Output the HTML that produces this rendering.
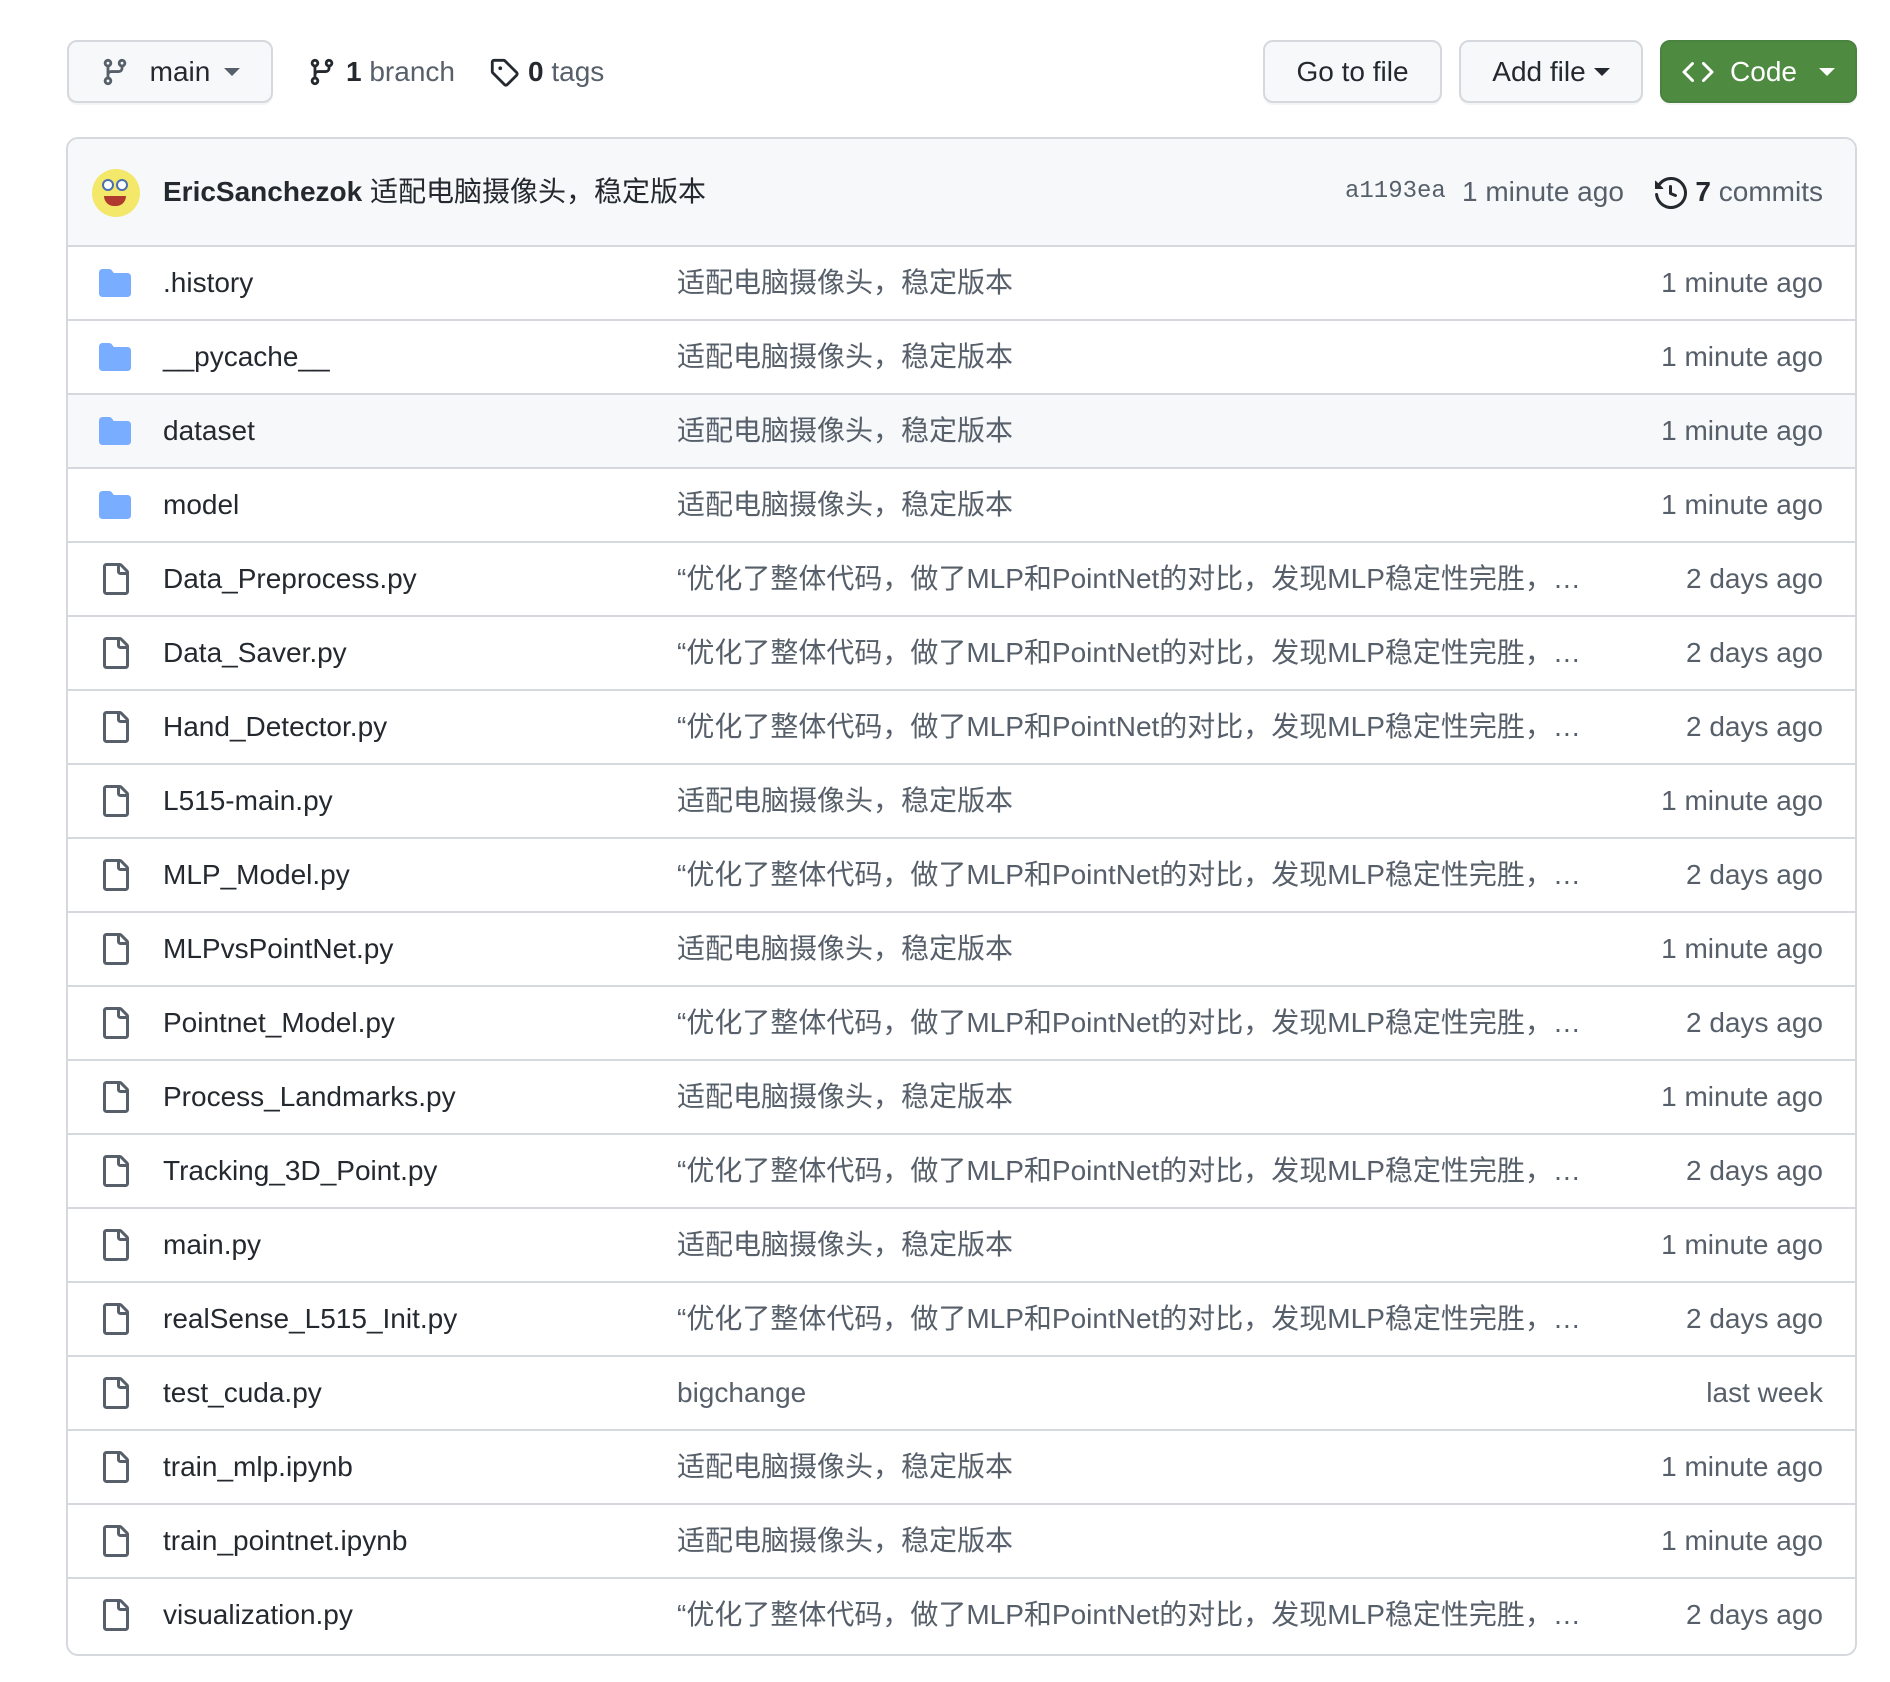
<!DOCTYPE html>
<html><head><meta charset="utf-8"><style>
*{box-sizing:border-box;margin:0;padding:0}
body{width:1890px;height:1682px;background:#fff;font-family:"Liberation Sans","Noto Sans CJK SC",sans-serif;color:#24292f;position:relative;overflow:hidden}
.btn{position:absolute;top:40px;height:63px;border:2px solid #d5d9de;border-radius:10px;background:#f6f8fa;font-size:28px;display:flex;align-items:center;justify-content:center;box-shadow:0 2px 0 rgba(0,0,0,.04)}
.caret{display:inline-block;width:0;height:0;border-left:8px solid transparent;border-right:8px solid transparent;border-top:8px solid currentColor;margin-left:14px}
.abs{position:absolute}
.box{position:absolute;left:66px;top:137px;width:1791px;height:1519px;border:2px solid #d5d9de;border-radius:12px;overflow:hidden}
.hdr{height:108px;background:#f6f8fa;border-bottom:2px solid #d5d9de;position:relative;font-size:28px}
.hdr .t{position:absolute;top:0;line-height:106px;white-space:nowrap}
.row{position:absolute;left:0;right:0;height:74px;border-top:2px solid #d5d9de;font-size:28px}
.row svg{position:absolute;left:31px;top:20px}
.row div{position:absolute;top:0;line-height:72px;white-space:nowrap}
.name{left:95px;color:#24292f}
.msg{left:609px;color:#57606a}
.age{right:32px;color:#57606a}
.gray{color:#57606a}
</style></head><body>
<div class="btn" style="left:67px;width:206px"><svg width="30" height="30" viewBox="0 0 16 16" fill="#57606a" style="margin-right:20px"><path d="M9.5 3.25a2.25 2.25 0 1 1 3 2.122V6A2.5 2.5 0 0 1 10 8.5H6a1 1 0 0 0-1 1v1.128a2.251 2.251 0 1 1-1.5 0V5.372a2.25 2.25 0 1 1 1.5 0v1.836A2.493 2.493 0 0 1 6 7h4a1 1 0 0 0 1-1v-.628A2.25 2.25 0 0 1 9.5 3.25Zm-6 0a.75.75 0 1 0 1.5 0 .75.75 0 0 0-1.5 0Zm8.25-.75a.75.75 0 1 0 0 1.5.75.75 0 0 0 0-1.5ZM4.25 12a.75.75 0 1 0 0 1.5.75.75 0 0 0 0-1.5Z"/></svg>main<span class="caret" style="color:#57606a"></span></div>
<svg class="abs" style="left:307px;top:57px" width="30" height="30" viewBox="0 0 16 16" fill="#24292f"><path d="M9.5 3.25a2.25 2.25 0 1 1 3 2.122V6A2.5 2.5 0 0 1 10 8.5H6a1 1 0 0 0-1 1v1.128a2.251 2.251 0 1 1-1.5 0V5.372a2.25 2.25 0 1 1 1.5 0v1.836A2.493 2.493 0 0 1 6 7h4a1 1 0 0 0 1-1v-.628A2.25 2.25 0 0 1 9.5 3.25Zm-6 0a.75.75 0 1 0 1.5 0 .75.75 0 0 0-1.5 0Zm8.25-.75a.75.75 0 1 0 0 1.5.75.75 0 0 0 0-1.5ZM4.25 12a.75.75 0 1 0 0 1.5.75.75 0 0 0 0-1.5Z"/></svg>
<div class="abs" style="left:346px;top:56px;font-size:28px"><b>1</b> <span class="gray">branch</span></div>
<svg class="abs" style="left:489px;top:57px" width="30" height="30" viewBox="0 0 16 16" fill="#24292f"><path d="M1 7.775V2.75C1 1.784 1.784 1 2.750 1h5.025c.464 0 .91.184 1.238.513l6.25 6.25a1.75 1.75 0 0 1 0 2.474l-5.026 5.026a1.75 1.75 0 0 1-2.474 0l-6.25-6.25A1.752 1.752 0 0 1 1 7.775Zm1.5 0c0 .066.026.13.073.177l6.25 6.25a.25.25 0 0 0 .354 0l5.025-5.025a.25.25 0 0 0 0-.354l-6.25-6.25a.25.25 0 0 0-.177-.073H2.75a.25.25 0 0 0-.25.25ZM6 5a1 1 0 1 1 0 2 1 1 0 0 1 0-2Z"/></svg>
<div class="abs" style="left:528px;top:56px;font-size:28px"><b>0</b> <span class="gray">tags</span></div>
<div class="btn" style="left:1263px;width:179px">Go to file</div>
<div class="btn" style="left:1459px;width:184px">Add file<span class="caret" style="margin-left:8px"></span></div>
<div class="btn" style="left:1660px;width:197px;background:#4f8a41;border-color:#4a8240;color:#fff"><svg width="32" height="32" viewBox="0 0 16 16" fill="#fff" style="margin-right:16px"><path d="m11.28 3.22 4.25 4.25a.75.75 0 0 1 0 1.06l-4.25 4.25a.749.749 0 0 1-1.275-.326.749.749 0 0 1 .215-.734L13.940 8l-3.72-3.72a.749.749 0 0 1 .326-1.275.749.749 0 0 1 .734.215Zm-6.56 0a.751.751 0 0 1 1.042.018.751.751 0 0 1 .018 1.042L2.060 8l3.72 3.72a.749.749 0 0 1-.326 1.275.749.749 0 0 1-.734-.215L.47 8.53a.75.75 0 0 1 0-1.060Z"/></svg>Code<span class="caret" style="margin-left:22px"></span></div>

<div class="box">
<div class="hdr">
<div class="abs" style="left:24px;top:30px;width:48px;height:48px;border-radius:50%;background:#f3e86a;overflow:hidden">
<div class="abs" style="left:10px;top:10px;width:12px;height:12px;border-radius:50%;background:#fff;border:2px solid #4a6fb0"></div>
<div class="abs" style="left:24px;top:10px;width:12px;height:12px;border-radius:50%;background:#fff;border:2px solid #4a6fb0"></div>
<div class="abs" style="left:12px;top:27px;width:22px;height:10px;border-radius:0 0 12px 12px;background:#b03a2e"></div></div>
<div class="t" style="left:95px"><b>EricSanchezok</b> 适配电脑摄像头，稳定版本</div>
<div class="t" style="left:1277px;font-family:'Liberation Mono',monospace;font-size:24px;color:#57606a">a1193ea</div>
<div class="t" style="left:1394px;color:#57606a">1 minute ago</div>
<svg class="abs" style="left:1587px;top:38px" width="32" height="32" viewBox="0 0 16 16" fill="#24292f"><path d="m.427 1.927 1.215 1.215a8.002 8.002 0 1 1-1.6 5.685.75.75 0 1 1 1.493-.154 6.5 6.5 0 1 0 1.18-4.458l1.358 1.358A.25.25 0 0 1 3.896 6H.25A.25.25 0 0 1 0 5.750V2.104a.25.25 0 0 1 .427-.177ZM7.75 4a.75.75 0 0 1 .75.75v2.992l2.028.812a.75.75 0 0 1-.557 1.392l-2.5-1A.751.751 0 0 1 7 8.25v-3.5A.75.75 0 0 1 7.75 4Z"/></svg>
<div class="t" style="right:32px"><b>7</b> <span class="gray">commits</span></div>
</div>
<div id="rows"></div>
</div>
<script>
var F='<svg width="32" height="32" viewBox="0 0 16 16" fill="#79adff"><path d="M1.75 1A1.75 1.75 0 0 0 0 2.75v10.5C0 14.216.784 15 1.750 15h12.5A1.75 1.75 0 0 0 16 13.25v-8.5A1.75 1.75 0 0 0 14.25 3H7.5a.25.25 0 0 1-.2-.1l-.9-1.2C6.07 1.26 5.55 1 5 1H1.75Z"/></svg>';
var D='<svg width="32" height="32" viewBox="0 0 16 16" fill="#57606a"><path d="M2 1.75C2 .784 2.784 0 3.75 0h6.586c.464 0 .909.184 1.237.513l2.914 2.914c.329.328.513.773.513 1.237v9.586A1.75 1.75 0 0 1 13.25 16h-9.5A1.75 1.75 0 0 1 2 14.25Zm1.75-.25a.25.25 0 0 0-.25.25v12.5c0 .138.112.25.25.25h9.5a.25.25 0 0 0 .25-.25V6h-2.75A1.75 1.75 0 0 1 9 4.25V1.5Zm6.75.062V4.25c0 .138.112.25.25.25h2.688l-.011-.013-2.914-2.914-.013-.011Z"/></svg>';
var A='适配电脑摄像头，稳定版本',B='“优化了整体代码，做了MLP和PointNet的对比，发现MLP稳定性完胜，…',m='1 minute ago',d='2 days ago';
var R=[[F,'.history',A,m],[F,'__pycache__',A,m],[F,'dataset',A,m,1],[F,'model',A,m],[D,'Data_Preprocess.py',B,d],[D,'Data_Saver.py',B,d],[D,'Hand_Detector.py',B,d],[D,'L515-main.py',A,m],[D,'MLP_Model.py',B,d],[D,'MLPvsPointNet.py',A,m],[D,'Pointnet_Model.py',B,d],[D,'Process_Landmarks.py',A,m],[D,'Tracking_3D_Point.py',B,d],[D,'main.py',A,m],[D,'realSense_L515_Init.py',B,d],[D,'test_cuda.py','bigchange','last week'],[D,'train_mlp.ipynb',A,m],[D,'train_pointnet.ipynb',A,m],[D,'visualization.py',B,d]];
var h='';R.forEach(function(r,i){var t=106+i*74;h+='<div class="row" style="top:'+t+'px;'+(i==0?'border-top-color:transparent;':'')+(r[4]?'background:#f6f8fa':'')+'">'+r[0]+'<div class="name">'+r[1]+'</div><div class="msg">'+r[2]+'</div><div class="age">'+r[3]+'</div></div>';});
document.getElementById('rows').innerHTML=h;
</script>
</body></html>
